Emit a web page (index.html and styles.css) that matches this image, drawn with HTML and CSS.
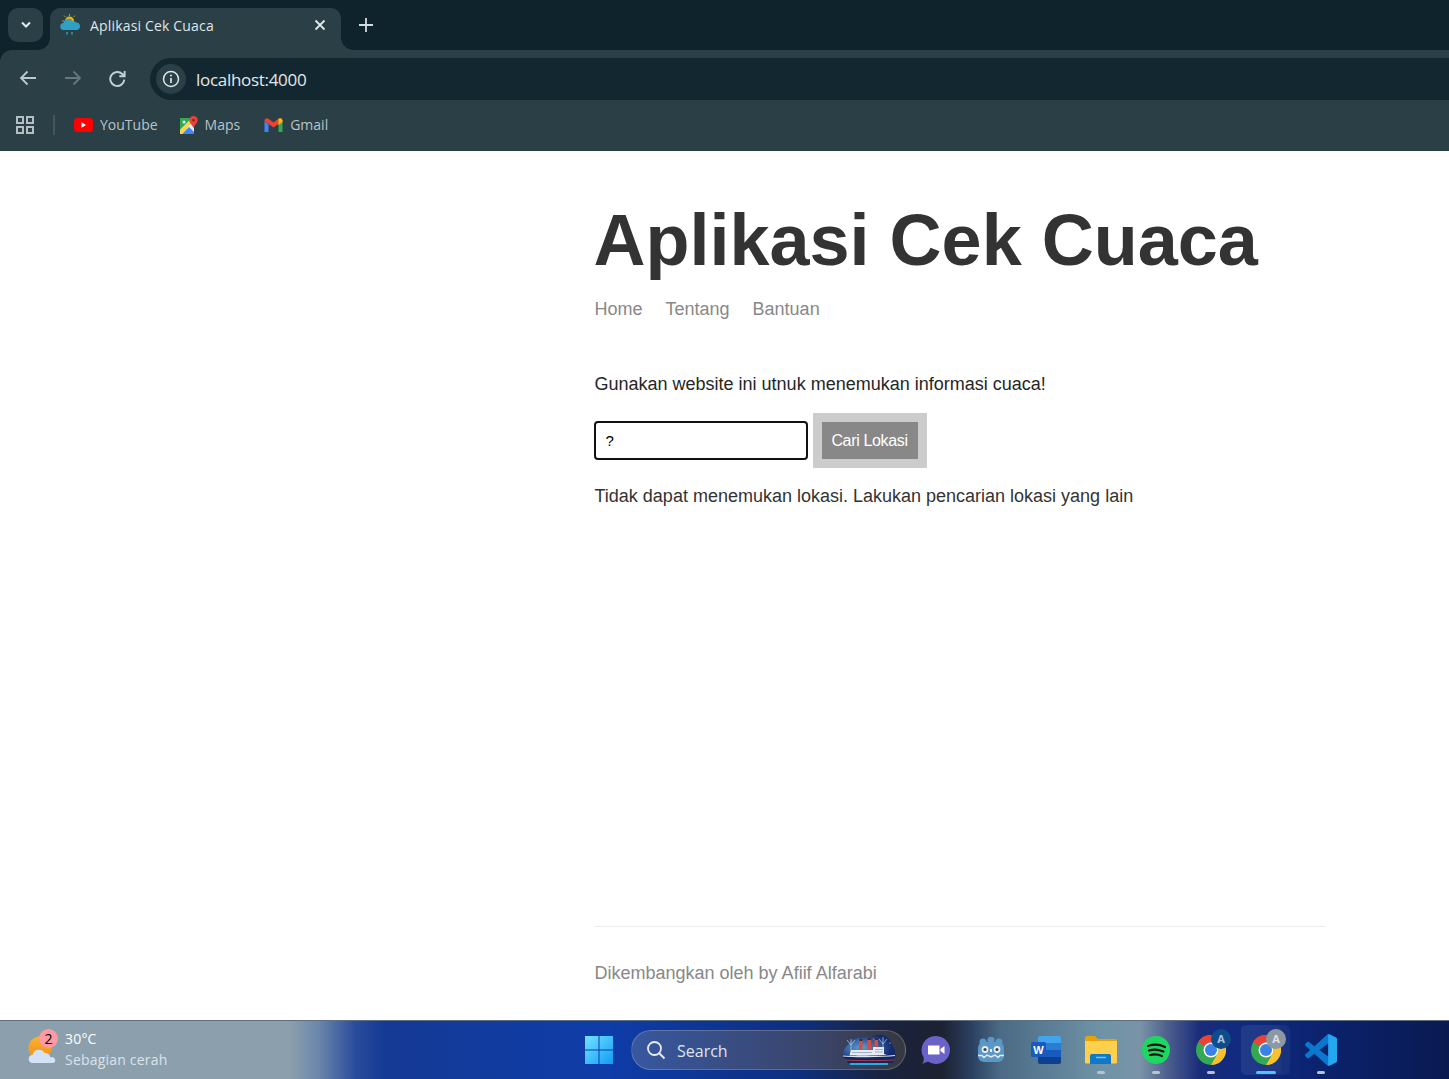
FILE: index.html
```html
<!DOCTYPE html>
<html lang="id">
<head>
    <meta charset="UTF-8">
    <title>Aplikasi Cek Cuaca</title>
    <link rel="stylesheet" href="styles.css">
</head>
<body>

<!-- browser -->
<div class="browser">
    <div class="tabstrip">
        <div class="tab-search">
            <svg width="12" height="8" viewBox="0 0 12 8"><path d="M2 1.500 6 5.500 10 1.500" fill="none" stroke="#e3e8ea" stroke-width="2"/></svg>
        </div>
        <div class="tab">
            <svg class="tab-icon" width="20" height="22" viewBox="0 0 20 22">
                <circle cx="9.500" cy="7" r="4.500" fill="#f5b400"/>
                <path d="M9.500 0v2M4 1.500l1.500 1.500M15 1.500l-1.500 1.500M2 7h2" stroke="#b59a3c" stroke-width="1"/>
                <path d="M4 16a3.500 3.500 0 0 1-.5-7 5 5 0 0 1 9.500-1.500 4 4 0 0 1 3.500 1 3.800 3.800 0 0 1 .5 7.500z" fill="#2f9fc4"/>
                <path d="M7 18v2.500M12 18v2.500" stroke="#2f9fc4" stroke-width="1.500"/>
            </svg>
            <span class="tab-title">Aplikasi Cek Cuaca</span>
            <svg class="tab-close" width="12" height="12" viewBox="0 0 12 12"><path d="M1.500 1.500l9 9M10.500 1.500l-9 9" stroke="#e3e8ea" stroke-width="1.800"/></svg>
        </div>
        <svg class="new-tab" width="14" height="14" viewBox="0 0 14 14"><path d="M7 0v14M0 7h14" stroke="#d5dcdf" stroke-width="1.800"/></svg>
    </div>

    <div class="toolbar">
        <svg class="nav-icon" width="18" height="16" viewBox="0 0 18 16"><path d="M17 8H2M8.500 1.500 2 8l6.500 6.500" fill="none" stroke="#b9c9cf" stroke-width="1.800"/></svg>
        <svg class="nav-icon" width="18" height="16" viewBox="0 0 18 16"><path d="M1 8h15M9.500 1.500 16 8l-6.500 6.500" fill="none" stroke="#66777e" stroke-width="1.800"/></svg>
        <svg class="nav-icon reload" width="17" height="17" viewBox="1.500 1 15 15"><path d="M15 9.500A6.200 6.200 0 1 1 13.200 4.500L15 6.300M15.300 1.800v4.700h-4.700" fill="none" stroke="#c3d0d5" stroke-width="1.700"/></svg>
        <div class="omnibox">
            <div class="site-info">
                <svg width="18" height="18" viewBox="0 0 18 18"><circle cx="9" cy="9" r="7.500" fill="none" stroke="#dfe6e8" stroke-width="1.500"/><path d="M9 8v5" stroke="#dfe6e8" stroke-width="1.700"/><circle cx="9" cy="5.500" r="1" fill="#dfe6e8"/></svg>
            </div>
            <span class="url">localhost:4000</span>
        </div>
    </div>

    <div class="bookmarks">
        <svg class="apps" width="18" height="18" viewBox="0 0 18 18"><path d="M1 1h6v6H1zM11 1h6v6h-6zM1 11h6v6H1zM11 11h6v6h-6z" fill="none" stroke="#b4bfc3" stroke-width="2"/></svg>
        <span class="bm-sep"></span>
        <a class="bookmark">
            <svg width="19" height="14" viewBox="0 0 19 14"><rect width="19" height="14" rx="3.500" fill="#f00"/><path d="M7.500 4.300v5.400L12 7z" fill="#fff"/></svg>
            YouTube
        </a>
        <a class="bookmark bookmark-maps">
            <svg width="18" height="18" viewBox="0 0 18 18">
                <path d="M0 2h14v16H0z" fill="#e8eaed"/>
                <path d="M0 2h12L0 14z" fill="#34a853"/>
                <path d="M2 18 9 11l5 5v2z" fill="#4285f4"/>
                <path d="M0 14 12 2h2v2L2 18H0z" fill="#fbd34d"/>
                <circle cx="4" cy="6" r="1.500" fill="#e8eaed"/>
                <path d="M13.500 0a4.200 4.200 0 0 1 4.200 4.200c0 3-4.200 5.500-4.200 8.300-.3-2.800-4.200-5.300-4.200-8.300A4.200 4.200 0 0 1 13.500 0z" fill="#ea4335"/>
                <circle cx="13.500" cy="4.200" r="1.400" fill="#8e2a1e"/>
            </svg>
            Maps
        </a>
        <a class="bookmark">
            <svg width="19" height="14" viewBox="0 0 18 14">
                <path d="M0 3v11h4V6z" fill="#4285f4"/>
                <path d="M14 6v8h4V3z" fill="#34a853"/>
                <path d="M0 3 9 9.500 18 3V2.500C18 .5 15.800-.6 14 .7L9 4.500 4 .7C2.200-.6 0 .5 0 2.500z" fill="#ea4335"/>
                <path d="M14 .7C15.800-.6 18 .5 18 2.500V4l-4 3z" fill="#fbbc04"/>
            </svg>
            Gmail
        </a>
    </div>
</div>

<!-- halaman -->
<div class="page">
    <div class="main-content">
        <h1>Aplikasi Cek Cuaca</h1>
        <nav class="menu">
            <a>Home</a>
            <a>Tentang</a>
            <a>Bantuan</a>
        </nav>
        <p class="intro">Gunakan website ini utnuk menemukan informasi cuaca!</p>
        <form class="search-form">
            <input class="search-input" type="text" value="?">
            <button class="search-btn" type="button">Cari Lokasi</button>
        </form>
        <p class="result">Tidak dapat menemukan lokasi. Lakukan pencarian lokasi yang lain</p>
    </div>
    <footer class="footer">Dikembangkan oleh by Afiif Alfarabi</footer>
</div>

<!-- taskbar -->
<div class="taskbar">
    <div class="weather">
        <div class="weather-icon">
            <svg width="30" height="30" viewBox="0 0 30 30">
                <defs><linearGradient id="sun" x1="0" y1="0" x2="0" y2="1"><stop offset="0" stop-color="#f9b233"/><stop offset="1" stop-color="#ee8f12"/></linearGradient></defs>
                <circle cx="13" cy="12" r="11.500" fill="url(#sun)"/>
                <path d="M6 27a4 4 0 0 1-.5-8 6.500 6.500 0 0 1 12-2 5.500 5.500 0 0 1 6 4.500 3 3 0 0 1 3 5.500z" fill="#d3e2f7"/>
            </svg>
            <span class="weather-badge">2</span>
        </div>
        <div class="weather-text">
            <div class="temp">30°C</div>
            <div class="cond">Sebagian cerah</div>
        </div>
    </div>
    <div class="task-center">
        <svg class="task-icon start" width="30" height="30" viewBox="0 0 30 30">
            <defs><linearGradient id="win" x1="0" y1="0" x2="1" y2="1"><stop offset="0" stop-color="#74e4ff"/><stop offset="1" stop-color="#0f9bf5"/></linearGradient></defs>
            <path d="M1 1h13.500v13.500H1zM15.500 1H29v13.500H15.500zM1 15.500h13.500V29H1zM15.500 15.500H29V29H15.500z" fill="url(#win)"/>
        </svg>
        <div class="task-search">
            <svg width="20" height="20" viewBox="0 0 20 20"><circle cx="8.500" cy="8.500" r="6.500" fill="none" stroke="#e6edf7" stroke-width="1.800"/><path d="M13 13l5.500 5.500" stroke="#e6edf7" stroke-width="2"/></svg>
            <span class="search-label">Search</span>
            <svg class="ship" width="58" height="32" viewBox="0 0 58 32">
                <defs><radialGradient id="sky" cx="0.35" cy="0.55" r="0.6"><stop offset="0" stop-color="#5f9dd0"/><stop offset="1" stop-color="#12296f"/></radialGradient></defs>
                <path d="M3 24C2 15 7 12 10 8 14 2 22 5 28 3c6-2 14-4 19 0 4 3 5 7 6 10 3 3 2 8 2 11z" fill="url(#sky)"/>
                <path d="M11 5v12M15 6l-4 5M7 6l4 5M43 3v12M47 5l-4 5M39 5l4 5" stroke="#b9cbe2" stroke-width=".7" fill="none"/>
                <circle cx="19" cy="6" r=".6" fill="#dfe9f7"/><circle cx="34" cy="5" r=".6" fill="#dfe9f7"/><circle cx="50" cy="9" r=".6" fill="#dfe9f7"/>
                <path d="M19 6h3.500v10H19zM27.500 5H31v11h-3.500zM34.500 5H38v11h-3.500z" fill="#cf4f45"/>
                <path d="M19 5h3.500v2H19zM27.500 4H31v2h-3.500zM34.500 4H38v2h-3.500z" fill="#3a2b3c"/>
                <path d="M11 16h22v-3h11v7l3 1v2H9z" fill="#e6ebf4"/>
                <path d="M12 18.500h20M35 15.500h8M35 18h8" stroke="#8aa3c8" stroke-width=".8"/>
                <path d="M2 21c8 1 40 1 54-1l-3 9H8z" fill="#14265f"/>
                <path d="M3 22c10 1 38 1 52-.5" fill="none" stroke="#dfe6f2" stroke-width="1.200"/>
                <path d="M5 26c10 .8 36 .8 49 0" fill="none" stroke="#a83a44" stroke-width="1"/>
                <path d="M10 30h38" stroke="#2fa8e0" stroke-width="2"/>
            </svg>
        </div>
        <div class="task-slot">
            <svg width="30" height="30" viewBox="0 0 30 30">
                <path d="M15 1a14 14 0 1 1-8 25.500L1 29c2-2 2-5 1.500-7A14 14 0 0 1 15 1z" fill="#6b62c9"/>
                <path d="M7 10.500h11.500v9H7zM19.500 14l4-3v8l-4-3z" fill="#fff"/>
            </svg>
        </div>
        <div class="task-slot">
            <svg width="28" height="26" viewBox="0 0 28 26">
                <circle cx="6" cy="5" r="3.500" fill="#5b97c6"/><circle cx="14" cy="3" r="3.500" fill="#5b97c6"/><circle cx="22" cy="5" r="3.500" fill="#5b97c6"/>
                <rect x="1" y="5" width="26" height="20" rx="6" fill="#5b97c6"/>
                <circle cx="8" cy="12.500" r="3.400" fill="#e6edf3"/><circle cx="20" cy="12.500" r="3.400" fill="#e6edf3"/>
                <circle cx="8" cy="12.500" r="1.600" fill="#33465a"/><circle cx="20" cy="12.500" r="1.600" fill="#33465a"/>
                <rect x="13" y="12" width="2" height="3" fill="#e6edf3"/>
                <path d="M1 18.500h4l2 2 3-2.500 4 2 4-2 3 2.500 2-2h4" fill="none" stroke="#e6edf3" stroke-width="1.400"/>
            </svg>
        </div>
        <div class="task-slot">
            <svg width="30" height="28" viewBox="0 0 30 28">
                <path d="M9 0h19a2 2 0 0 1 2 2v5H7V2a2 2 0 0 1 2-2z" fill="#41a5ee"/>
                <path d="M7 7h23v7H7z" fill="#2b7cd3"/>
                <path d="M7 14h23v7H7z" fill="#185abd"/>
                <path d="M7 21h23v5a2 2 0 0 1-2 2H9a2 2 0 0 1-2-2z" fill="#103f91"/>
                <rect x="0" y="6" width="15" height="15" rx="1.500" fill="#185abd"/>
                <text class="word-w" x="7.500" y="17.500">W</text>
            </svg>
        </div>
        <div class="task-slot open">
            <svg width="32" height="28" viewBox="0 0 32 28">
                <path d="M0 2a2 2 0 0 1 2-2h8l3 3h17a2 2 0 0 1 2 2v8H0z" fill="#e5a50a"/>
                <path d="M0 5h32v21a1.500 1.500 0 0 1-1.500 1.500h-29A1.500 1.500 0 0 1 0 26z" fill="#ffd04d"/>
                <path d="M5 20a2 2 0 0 1 2-2h17a2 2 0 0 1 2 2v8H5z" fill="#0f78c9"/>
                <path d="M11 21.500h10" stroke="#7cc5f2" stroke-width="1.500"/>
            </svg>
        </div>
        <div class="task-slot open">
            <svg width="28" height="28" viewBox="0 0 28 28">
                <circle cx="14" cy="14" r="14" fill="#1ed760"/>
                <path d="M6 10c6-2 12-1.500 17 1M7 14.500c5-1.500 10-1 14.500 1M8 19c4-1 8-.7 12 1" fill="none" stroke="#111" stroke-width="2.200" stroke-linecap="round"/>
            </svg>
        </div>
        <div class="task-slot open">
            <svg class="chrome-icon" width="30" height="30" viewBox="0 0 30 30">
                <circle cx="15" cy="15" r="15" fill="#34a853"/>
                <path d="M15 0a15 15 0 0 1 13 7.500H15a7.500 7.500 0 0 0-6.500 3.800L2 7A15 15 0 0 1 15 0z" fill="#ea4335"/>
                <path d="M28 7.500A15 15 0 0 1 15 30l6.500-11.200A7.500 7.500 0 0 0 21.500 11z" fill="#fbc02d"/>
                <circle cx="15" cy="15" r="7.500" fill="#fff"/><circle cx="15" cy="15" r="6" fill="#3b82e6"/>
            </svg>
            <span class="profile-badge">A</span>
        </div>
        <div class="task-slot open active">
            <svg class="chrome-icon" width="30" height="30" viewBox="0 0 30 30">
                <circle cx="15" cy="15" r="15" fill="#34a853"/>
                <path d="M15 0a15 15 0 0 1 13 7.500H15a7.500 7.500 0 0 0-6.500 3.800L2 7A15 15 0 0 1 15 0z" fill="#ea4335"/>
                <path d="M28 7.500A15 15 0 0 1 15 30l6.500-11.200A7.500 7.500 0 0 0 21.500 11z" fill="#fbc02d"/>
                <circle cx="15" cy="15" r="7.500" fill="#fff"/><circle cx="15" cy="15" r="6" fill="#3b82e6"/>
            </svg>
            <span class="profile-badge grey">A</span>
        </div>
        <div class="task-slot open">
            <svg width="32" height="32" viewBox="0 0 24 24">
                <defs><clipPath id="vsRight"><rect x="17.300" y="0" width="7" height="24"/></clipPath></defs>
                <path id="vsLogo" d="M23.150 2.587 18.210.21a1.494 1.494 0 0 0-1.705.29l-9.460 8.630-4.120-3.128a.999.999 0 0 0-1.276.057L.327 7.261A1 1 0 0 0 .326 8.740L3.899 12 .326 15.260a1 1 0 0 0 .001 1.479L1.650 17.940a.999.999 0 0 0 1.276.057l4.120-3.128 9.460 8.630a1.492 1.492 0 0 0 1.704.290l4.942-2.377A1.500 1.500 0 0 0 24 20.060V3.939a1.500 1.500 0 0 0-.850-1.352zm-5.146 14.861L10.826 12l7.178-5.448v10.896z" fill="#0a78cf"/>
                <path d="M23.150 2.587 18.210.21 17.300.3V23.700l.9.090 4.940-2.377A1.500 1.500 0 0 0 24 20.060V3.939a1.500 1.500 0 0 0-.850-1.352z" fill="#24a6f0" clip-path="url(#vsRight)"/>
            </svg>
        </div>
    </div>
</div>

</body>
</html>
```

FILE: styles.css
```css
html, body {
    height: 100%;
}
body {
    margin: 0;
    font-family: "Liberation Sans", Arial, sans-serif;
    display: flex;
    flex-direction: column;
    background-color: #fff;
    overflow: hidden;
}

/* browser */
.browser {
    background-color: #0e232b;
    flex-shrink: 0;
}
.tabstrip {
    height: 50px;
    display: flex;
    align-items: flex-end;
    padding-left: 8px;
    font-family: "Open Sans", "Noto Sans", sans-serif;
}
.tab-search {
    width: 35px;
    height: 34px;
    margin-bottom: 8px;
    background-color: #2b3f47;
    border-radius: 10px;
    display: flex;
    align-items: center;
    justify-content: center;
}
.tab {
    width: 291px;
    height: 42px;
    margin-left: 7px;
    background-color: #2b3f47;
    border-radius: 10px 10px 0 0;
    display: flex;
    align-items: center;
    padding: 0 15px 8px 10px;
    box-sizing: border-box;
    color: #dfe6e8;
    font-size: 14px;
    letter-spacing: 0.17px;
    position: relative;
}
.tab::before, .tab::after {
    content: "";
    position: absolute;
    bottom: 0;
    width: 12px;
    height: 12px;
}
.tab::before {
    left: -12px;
    background: radial-gradient(circle at 0 0, transparent 11.5px, #2b3f47 12px);
}
.tab::after {
    right: -12px;
    background: radial-gradient(circle at 100% 0, transparent 11.5px, #2b3f47 12px);
}
.tab-icon {
    margin-right: 10px;
}
.tab-title {
    flex: 1;
}
.new-tab {
    margin: 0 0 18px 18px;
}
.toolbar {
    height: 50px;
    box-sizing: border-box;
    background-color: #2b3f47;
    border-radius: 12px 0 0 0;
    display: flex;
    align-items: center;
    padding: 8px 0 0 19px;
}
.nav-icon {
    margin: -2px 27px 0 0;
}
.nav-icon.reload {
    margin-right: 28px;
}
.omnibox {
    flex: 1;
    height: 42px;
    margin-left: -4px;
    background-color: #122730;
    border-radius: 21px 0 0 21px;
    display: flex;
    align-items: center;
    padding-left: 6px;
}
.site-info {
    width: 30px;
    height: 30px;
    border-radius: 50%;
    background-color: #2b3f47;
    display: flex;
    align-items: center;
    justify-content: center;
}
.url {
    margin-left: 10px;
    color: #e3e8ea;
    font-family: "Open Sans", "Noto Sans", sans-serif;
    font-size: 17px;
    letter-spacing: -0.3px;
}
.bookmarks {
    height: 51px;
    box-sizing: border-box;
    background-color: #2b3f47;
    display: flex;
    align-items: center;
    padding: 0 0 2px 16px;
    font-family: "Open Sans", "Noto Sans", sans-serif;
    font-size: 14px;
    color: #b9c4c8;
}
.bm-sep {
    width: 2px;
    height: 20px;
    margin: 0 19px;
    background-color: #44565d;
}
.bookmark {
    display: flex;
    align-items: center;
    gap: 7px;
    margin-right: 22px;
}
.bookmark-maps {
    margin-right: 24px;
}

/* halaman */
.page {
    flex: 1;
    margin-left: 593.5px;
    width: 732.5px;
    display: flex;
    flex-direction: column;
    color: #333;
}
.main-content {
    flex: 1;
}
h1 {
    margin: 46px 0 0;
    font-size: 72px;
    line-height: 86px;
    font-weight: bold;
    color: #333;
}
.menu {
    margin-top: 16px;
    display: flex;
    gap: 23px;
    font-size: 18px;
    line-height: 21px;
    color: #888;
    padding-left: 1px;
}
.intro {
    margin: 54px 0 0 1px;
    font-size: 18px;
    line-height: 21px;
    color: #262626;
}
.search-form {
    margin: 18px 0 0 0;
    display: flex;
    align-items: center;
}
.search-input {
    width: 214px;
    height: 39px;
    box-sizing: border-box;
    border: 2px solid #111;
    border-radius: 4px;
    padding: 0 10px;
    font-family: "Liberation Sans", Arial, sans-serif;
    font-size: 15px;
    color: #000;
    outline: none;
}
.search-btn {
    margin-left: 5px;
    width: 114px;
    height: 55px;
    box-sizing: border-box;
    border: 9px solid #ccc;
    background-color: #888;
    color: #fff;
    font-family: "Liberation Sans", Arial, sans-serif;
    font-size: 16px;
    letter-spacing: -0.35px;
    padding: 0;
}
.result {
    margin: 18px 0 0 1px;
    font-size: 18px;
    line-height: 21px;
}
.footer {
    height: 94px;
    box-sizing: border-box;
    border-top: 1px solid #eee;
    padding-top: 36px;
    padding-left: 1px;
    font-size: 18px;
    line-height: 21px;
    color: #888;
}

/* taskbar */
.taskbar {
    height: 59px;
    flex-shrink: 0;
    position: relative;
    box-sizing: border-box;
    border-top: 1px solid #5f6f7f;
    background: linear-gradient(90deg, #8c9fad 0, #8c9fad 20%, #6a86aa 22%, #2b4c9c 24.500%, #153a95 26.500%, #0e3ca8 42%, #0d2f80 55%, #1a2340 61%, #1c2230 65%, #2a3f60 67%, #4a6a85 69%, #6f93a6 76%, #7a93a8 78.700%, #4a5c8c 80.700%, #1a2c7a 82.800%, #0e2a80 86%, #0a2068 93%, #0a1a50 100%);
    font-family: "Open Sans", "Noto Sans", sans-serif;
}
.weather {
    position: absolute;
    left: 27px;
    top: 8px;
    display: flex;
    align-items: flex-start;
}
.weather-icon {
    width: 38px;
    position: relative;
    padding-top: 7px;
}
.weather-badge {
    position: absolute;
    left: 12px;
    top: 0;
    width: 19px;
    height: 19px;
    border-radius: 50%;
    background-color: #ff9aa2;
    color: #000;
    font-size: 14px;
    line-height: 19px;
    text-align: center;
}
.weather-text {
    font-size: 14px;
    line-height: 20px;
    letter-spacing: 0.2px;
}
.temp {
    color: #fff;
}
.cond {
    margin-top: 1px;
    color: #dbe3e9;
}
.task-center {
    position: absolute;
    left: 574px;
    top: 0;
    height: 58px;
    display: flex;
    align-items: center;
}
.start {
    margin: 0 10px;
}
.task-search {
    width: 275px;
    height: 40px;
    margin: 0 2px 0 7px;
    box-sizing: border-box;
    border: 1px solid rgba(255, 255, 255, 0.2);
    border-radius: 20px;
    background: linear-gradient(90deg, #37579f, #3a4468 70%, #35383f);
    display: flex;
    align-items: center;
    padding-left: 14px;
    color: #dbe5f3;
    font-size: 16px;
}
.search-label {
    margin-left: 11px;
    padding-top: 2px;
    flex: 1;
}
.ship {
    margin-right: 7px;
}
.task-slot {
    width: 55px;
    height: 50px;
    display: flex;
    align-items: center;
    justify-content: center;
    position: relative;
}
.task-slot svg {
    position: relative;
}
.task-slot.open::after {
    content: "";
    position: absolute;
    bottom: 1px;
    left: 50%;
    width: 8px;
    height: 3px;
    margin-left: -4px;
    border-radius: 2px;
    background-color: #b9c3d0;
}
.task-slot.active::before {
    content: "";
    position: absolute;
    left: 3px;
    top: 0;
    width: 40px;
    height: 50px;
    border-radius: 5px;
    background-color: rgba(255, 255, 255, 0.08);
    box-shadow: 9px 0 0 rgba(255, 255, 255, 0.05);
}
.task-slot.active::after {
    width: 20px;
    margin-left: -10px;
    background-color: #4fc3ff;
}
.word-w {
    font-family: "Liberation Sans", Arial, sans-serif;
    font-size: 11px;
    font-weight: bold;
    fill: #fff;
    text-anchor: middle;
}
.profile-badge {
    position: absolute;
    left: 28px;
    top: 4px;
    width: 20px;
    height: 20px;
    border-radius: 50%;
    background-color: #0f4c8a;
    color: #a8c8e8;
    font-size: 11px;
    font-weight: bold;
    line-height: 20px;
    text-align: center;
}
.profile-badge.grey {
    background-color: #8c98a2;
    color: #dde2e6;
}
```
